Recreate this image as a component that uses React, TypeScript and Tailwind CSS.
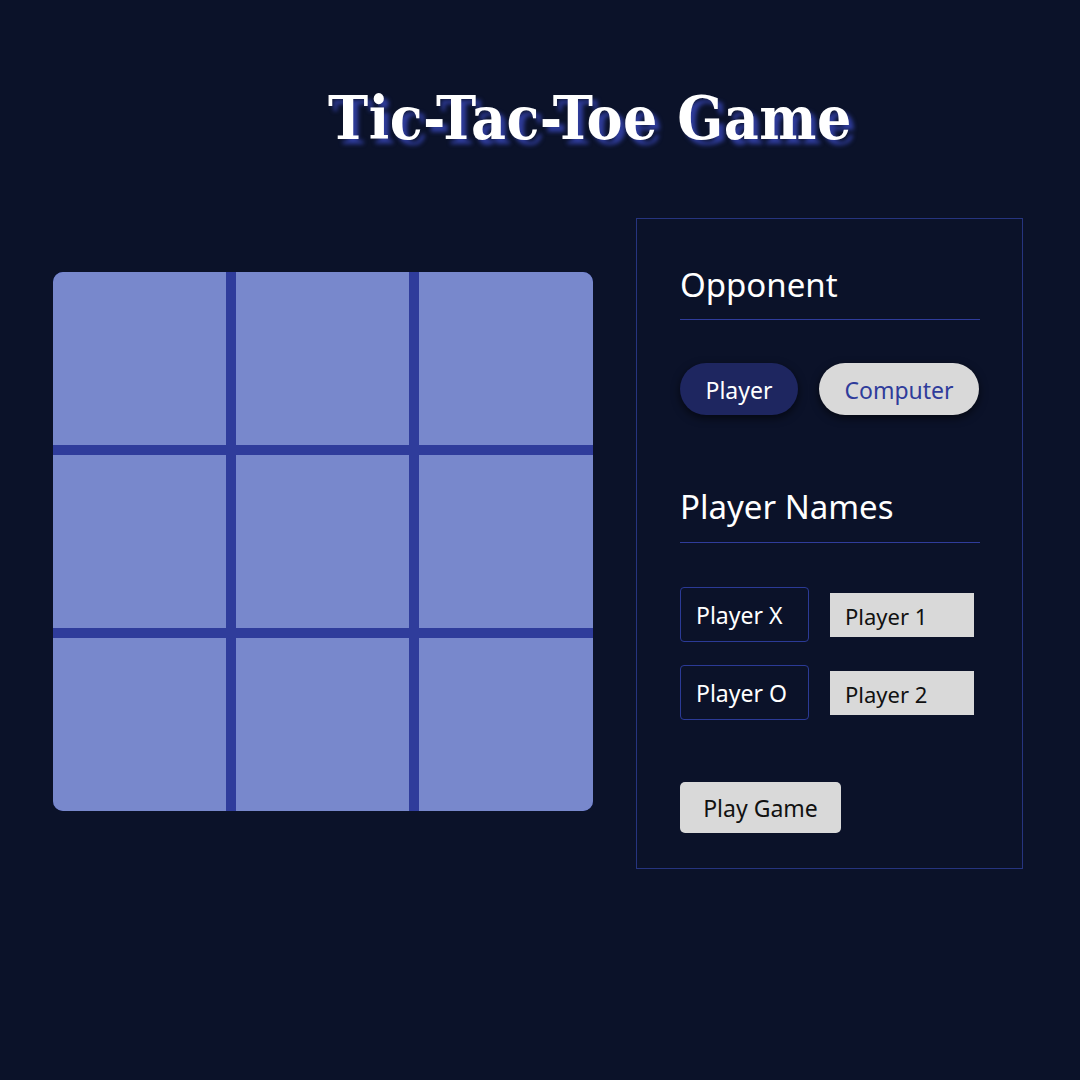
import { useState } from 'react';

export default function App() {
  const [opponent, setOpponent] = useState<'player' | 'computer'>('player');
  const [board] = useState<string[]>(Array(9).fill(''));

  return (
    <div
      className="w-[1080px] h-[1080px] bg-[#0b1229] text-white overflow-hidden"
      style={{ fontFamily: '"Noto Sans", "Open Sans", sans-serif' }}
    >
      {/* Title */}
      <h1
        className="pt-[80px] pl-[328px] text-[60px] leading-[76px] font-bold tracking-[0.5px] text-white [font-stretch:condensed] [text-shadow:5px_5px_4px_#2f3c9b]"
        style={{ fontFamily: '"DejaVu Serif Condensed", "DejaVu Serif", serif' }}
      >
        Tic-Tac-Toe Game
      </h1>

      <div className="flex items-start pl-[53px] mt-[62px]">
        {/* Board */}
        <div className="mt-[54px] w-[540px] h-[539px] bg-[#2f3c9b] rounded-[10px] overflow-hidden grid grid-cols-[173px_173px_174px] grid-rows-[173px_173px_173px] gap-[10px]">
          {board.map((cell, i) => (
            <button key={i} className="bg-[#7888cc]">
              {cell}
            </button>
          ))}
        </div>

        {/* Settings panel */}
        <div className="ml-[43px] w-[387px] h-[651px] border border-[#26347f] pl-[43px] pr-[42px] pt-[46px]">
          <h2 className="text-[33px] leading-[40px] font-normal">Opponent</h2>
          <div className="mt-[14px] h-px bg-[#2f3c9b]" />

          <div className="flex gap-[21px] mt-[43px]">
            <button
              onClick={() => setOpponent('player')}
              className={`w-[118px] h-[52px] pt-[3px] rounded-full text-[23px] shadow-[0_3px_8px_rgba(0,0,0,0.6)] ${
                opponent === 'player' ? 'bg-[#1e2660] text-white' : 'bg-[#d9d9d9] text-[#2f3c9b]'
              }`}
            >
              Player
            </button>
            <button
              onClick={() => setOpponent('computer')}
              className={`w-[160px] h-[52px] pt-[3px] rounded-full text-[23px] shadow-[0_3px_8px_rgba(0,0,0,0.6)] ${
                opponent === 'computer' ? 'bg-[#1e2660] text-white' : 'bg-[#d9d9d9] text-[#2f3c9b]'
              }`}
            >
              Computer
            </button>
          </div>

          <h2 className="mt-[72px] text-[33px] leading-[40px] font-normal">Player Names</h2>
          <div className="mt-[15px] h-px bg-[#2f3c9b]" />

          <div className="mt-[44px] flex flex-col gap-[23px]">
            {[
              ['Player X', 'Player 1'],
              ['Player O', 'Player 2'],
            ].map(([label, name]) => (
              <div key={label} className="flex items-center gap-[21px]">
                <div className="w-[129px] h-[55px] border border-[#2b3a96] rounded-[4px] flex items-center pl-[15px] pt-[2px] text-[23px]">
                  {label}
                </div>
                <input
                  defaultValue={name}
                  className="w-[144px] h-[44px] bg-[#d9d9d9] text-[#111] text-[22px] pl-[15px] pt-[2px] outline-none"
                />
              </div>
            ))}
          </div>

          <button className="mt-[62px] w-[161px] h-[51px] pt-[2px] bg-[#d9d9d9] rounded-[5px] text-[#111] text-[23px]">
            Play Game
          </button>
        </div>
      </div>
    </div>
  );
}
